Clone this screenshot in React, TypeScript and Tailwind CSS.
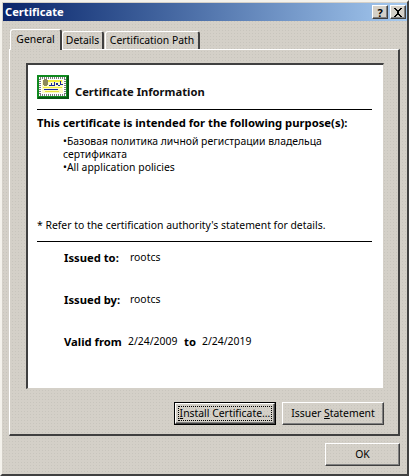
const dither = "bg-[#d4d0c8] bg-[radial-gradient(circle,#c8c5bd_0.6px,transparent_0.8px)] bg-[size:3px_3px]";
const raisedBtn = "border border-t-white border-l-white border-r-[#404040] border-b-[#404040] shadow-[inset_-1px_-1px_0_#808080]";

function CertIcon() {
  const dots: number[] = [];
  for (let i = 0; i < 13; i++) dots.push(i);
  return (
    <svg width="32" height="24" viewBox="0 0 32 24" shapeRendering="crispEdges">
      <rect x="0" y="0" width="32" height="24" fill="#0f8a1e" />
      <rect x="30" y="1" width="2" height="23" fill="#075510" />
      <rect x="1" y="22" width="31" height="2" fill="#075510" />
      <rect x="2" y="2" width="27" height="19" fill="#ffffff" />
      {dots.map((i) => (
        <g key={i}>
          <rect x={3 + i * 2} y="2" width="1" height="2" fill="#7d7d7d" />
          <rect x={3 + i * 2} y="19" width="1" height="2" fill="#7d7d7d" />
        </g>
      ))}
      {[0, 1, 2, 3, 4, 5, 6, 7].map((i) => (
        <g key={i}>
          <rect x="2" y={4 + i * 2} width="2" height="1" fill="#7d7d7d" />
          <rect x="27" y={4 + i * 2} width="2" height="1" fill="#7d7d7d" />
        </g>
      ))}
      <rect x="5" y="5" width="21" height="13" fill="#fdfcc4" />
      <rect x="11" y="5" width="14" height="2" fill="#f2ee3a" />
      <rect x="6" y="12" width="19" height="1" fill="#f2ee3a" />
      <rect x="6" y="5" width="5" height="5" fill="#8d8a58" />
      <rect x="7" y="4" width="3" height="7" fill="#8d8a58" />
      <path d="M12 10h2V8h1v2h2V7h1v3h1V8h2v3h2V6h1v3h2v1h-8v1h-6z" fill="#1a2a9a" />
      <rect x="7" y="14" width="14" height="1" fill="#1a2a9a" />
      <rect x="8" y="16" width="14" height="1" fill="#e8e23a" />
    </svg>
  );
}

function Tab({ label, active, w }: { label: string; active?: boolean; w: string }) {
  return (
    <div
      className={
        active
          ? `relative z-10 ${w} h-[21px] -mb-px mr-0 flex items-center justify-center rounded-t-[3px] border-t border-l border-white border-r-2 border-r-[#404040] ${dither}`
          : `${w} h-[18px] mr-px flex items-center justify-center rounded-t-[3px] border-t border-l border-white border-r-2 border-r-[#404040] ${dither}`
      }
    >
      <span className={active ? "mt-[-1px]" : ""}>{label}</span>
    </div>
  );
}

export default function App() {
  return (
    <div
      className={`w-[409px] h-[476px] overflow-hidden flex flex-col border-2 border-t-[#f4f2ec] border-l-[#f4f2ec] border-r-[#404040] border-b-[#404040] text-[10.4px] text-black ${dither}`}
      style={{ fontFamily: '"Noto Sans", "Open Sans", sans-serif' }}
    >
      <div className="ml-px mr-0 mt-px h-[18px] shrink-0 flex items-center justify-between pl-[2px] pr-px bg-gradient-to-r from-[#0a246a] to-[#a6caf0]">
        <span className="font-bold text-white text-[11.2px]">Certificate</span>
        <div className="flex gap-[2px]">
          <div className={`w-4 h-[14px] flex items-center justify-center bg-[#d4d0c8] font-bold text-[11px] leading-none ${raisedBtn}`}>?</div>
          <div className={`w-4 h-[14px] flex items-center justify-center bg-[#d4d0c8] ${raisedBtn}`}>
            <svg width="10" height="9" viewBox="0 0 10 9" shapeRendering="crispEdges">
              <path d="M1 0h2v1h1v1h2V1h1V0h2v1H8v1H7v1H6v3h1v1h1v1h1v1H7V8H6V7H4v1H3v1H1V8h1V7h1V6h1V3H3V2H2V1H1z" fill="#000" />
            </svg>
          </div>
        </div>
      </div>

      <div className="ml-[7px] mr-[7px] mt-[7px] flex flex-col">
        <div className="flex items-end pl-[1px] h-[21px]">
          <Tab label="General" active w="w-[52px]" />
          <Tab label="Details" w="w-[42px]" />
          <Tab label="Certification Path" w="w-[95px]" />
        </div>
        <div className="h-[387px] border border-t-white border-l-white border-r-[#404040] border-b-[#404040] border-r-2 border-b-2 pl-4 pr-[14px] pt-[13px]">
          <div className="h-[326px] bg-white border border-t-[#404040] border-l-[#404040] border-r-[#d4d0c8] border-b-[#d4d0c8] border-t-2 border-l-2 pl-[9px] pr-[11px] pt-[10px]">
            <div className="h-[25px] flex items-start gap-[6px]">
              <CertIcon />
              <span className="font-bold text-[11.2px] mt-[9px] text-[#101010]">Certificate Information</span>
            </div>
            <div className="mt-[9px] h-px bg-black" />
            <div className="mt-[4px] font-bold text-[11.25px] leading-[17px]">This certificate is intended for the following purpose(s):</div>
            <div className="mt-[4px] pl-[26px] pr-[20px] leading-[13px]">
              <div>•Базовая политика личной регистрации владельца сертификата</div>
              <div>•All application policies</div>
            </div>
            <div className="mt-[45px] leading-[13px]">* Refer to the certification authority's statement for details.</div>
            <div className="mt-[9px] h-px bg-black" />
            <div className="mt-[9px] pl-[27px] flex flex-col gap-[29px] leading-[13px]">
              <div className="flex">
                <span className="font-bold text-[11.25px] w-[66px]">Issued to:</span>
                <span>rootcs</span>
              </div>
              <div className="flex">
                <span className="font-bold text-[11.25px] w-[66px]">Issued by:</span>
                <span>rootcs</span>
              </div>
              <div className="flex">
                <span className="font-bold text-[11.25px] w-[64px]">Valid from</span>
                <span className="w-[56px]">2/24/2009</span>
                <span className="font-bold text-[11.25px] w-[18px]">to</span>
                <span>2/24/2019</span>
              </div>
            </div>
          </div>
          <div className="mt-[13px] flex justify-end gap-[6px]">
            <div className="w-[102px] h-[23px] border border-black">
              <div className={`h-full flex items-center justify-center p-[2px] ${raisedBtn}`}>
                <span className="border border-dotted border-black w-full h-full flex items-center justify-center leading-none whitespace-nowrap">
                  <span><span className="underline">I</span>nstall Certificate...</span>
                </span>
              </div>
            </div>
            <div className={`w-[102px] h-[23px] flex items-center justify-center whitespace-nowrap ${raisedBtn}`}>
              <span>Issuer <span className="underline">S</span>tatement</span>
            </div>
          </div>
        </div>
        <div className="mt-[7px] flex justify-end">
          <div className={`w-[75px] h-[23px] flex items-center justify-center ${raisedBtn}`}>OK</div>
        </div>
      </div>
    </div>
  );
}
